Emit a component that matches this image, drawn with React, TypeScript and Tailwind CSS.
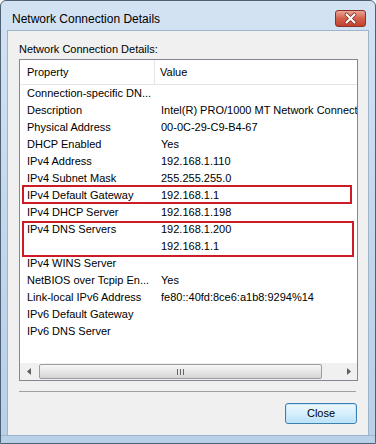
const rows: [string, string][] = [
  ["Connection-specific DN...", ""],
  ["Description", "Intel(R) PRO/1000 MT Network Connection"],
  ["Physical Address", "00-0C-29-C9-B4-67"],
  ["DHCP Enabled", "Yes"],
  ["IPv4 Address", "192.168.1.110"],
  ["IPv4 Subnet Mask", "255.255.255.0"],
  ["IPv4 Default Gateway", "192.168.1.1"],
  ["IPv4 DHCP Server", "192.168.1.198"],
  ["IPv4 DNS Servers", "192.168.1.200"],
  ["", "192.168.1.1"],
  ["IPv4 WINS Server", ""],
  ["NetBIOS over Tcpip En...", "Yes"],
  ["Link-local IPv6 Address", "fe80::40fd:8ce6:a1b8:9294%14"],
  ["IPv6 Default Gateway", ""],
  ["IPv6 DNS Server", ""],
]

function CloseX() {
  return (
    <svg width="31" height="17" viewBox="0 0 31 17">
      <path d="M11.5 4.5 L19.5 12.5 M19.5 4.5 L11.5 12.5" stroke="#7a2418" strokeWidth="3.6" strokeLinecap="round" />
      <path d="M11.5 4.5 L19.5 12.5 M19.5 4.5 L11.5 12.5" stroke="#ffffff" strokeWidth="2.2" strokeLinecap="round" />
    </svg>
  )
}

function HScrollBar() {
  return (
    <div className="flex h-[17px] items-center bg-[#f0f0f0]">
      <div className="flex w-[17px] items-center justify-center">
        <svg width="4" height="7" viewBox="0 0 4 7">
          <path d="M4 0 L0 3.5 L4 7 Z" fill="#606060" />
        </svg>
      </div>
      <div className="ml-[2px] flex h-[15px] w-[283px] items-center justify-center rounded-[2px] border border-[#9c9c9c] bg-gradient-to-b from-[#f6f6f6] via-[#e6e6e6] to-[#d6d6d6]">
        <div className="flex gap-[2px]">
          <div className="h-[6px] w-[1px] bg-[#666]" />
          <div className="h-[6px] w-[1px] bg-[#666]" />
          <div className="h-[6px] w-[1px] bg-[#666]" />
        </div>
      </div>
      <div className="flex-1" />
      <div className="flex w-[17px] items-center justify-center">
        <svg width="4" height="7" viewBox="0 0 4 7">
          <path d="M0 0 L4 3.5 L0 7 Z" fill="#606060" />
        </svg>
      </div>
    </div>
  )
}

export default function App() {
  return (
    <div
      className="flex h-[444px] w-[376px] flex-col rounded-t-[6px] border border-[#4e6174] bg-gradient-to-b from-[#d3e3f4] via-[#c3d7ed] to-[#b9d0e9] text-black"
      style={{ fontFamily: '"Liberation Sans", Arial, sans-serif' }}
    >
      {/* title bar */}
      <div className="flex h-[29px] items-center justify-between pl-[11px] pr-[9px] pt-[6px]">
        <span className="text-[12px]">Network Connection Details</span>
        <div className="h-[17px] w-[31px] rounded-[3px] border border-[#8a3226] bg-gradient-to-b from-[#e8a596] via-[#d2604b] to-[#c3412c]">
          <div className="-m-px">
            <CloseX />
          </div>
        </div>
      </div>

      {/* client area */}
      <div className="mx-[6px] flex flex-1 flex-col border border-b-0 border-[#9fb5cc] bg-[#f0f0f0] px-[11px] text-[11px]">
        <div className="pt-[12px] leading-[13px]">Network Connection Details:</div>

        <div className="relative mt-[3px] flex h-[322px] w-[339px] flex-col overflow-hidden border border-[#828790] bg-white">
          <div className="flex h-[25px] shrink-0 items-center border-b border-[#e5e5e5]">
            <div className="flex h-full w-[135px] items-center border-r border-[#e5e5e5] pl-[7px]">Property</div>
            <div className="pl-[5px]">Value</div>
          </div>
          <div className="flex-1">
            {rows.map(([k, v], i) => (
              <div key={i} className="flex h-[17px] items-center whitespace-nowrap">
                <div className="w-[135px] shrink-0 pl-[7px]">{k}</div>
                <div className="pl-[6px]">{v}</div>
              </div>
            ))}
          </div>
          <HScrollBar />

          {/* highlight boxes */}
          <div className="absolute left-[2px] top-[125px] h-[19px] w-[330px] border-2 border-[#cc1b25]" />
          <div className="absolute left-[2px] top-[161px] h-[36px] w-[332px] border-2 border-[#cc1b25]" />
        </div>

        <div className="mt-[10px] w-[337px] border-t border-[#a0a0a0]" />

        <div className="mt-[11px] flex justify-end pr-[0px]">
          <button className="h-[21px] w-[72px] rounded-[3px] border border-[#3c7fb1] bg-gradient-to-b from-[#eef8fe] via-[#d6effc] to-[#b9e2f9] text-[11px] shadow-[inset_0_0_0_1px_#c4e6fa]">
            Close
          </button>
        </div>
      </div>
      <div className="h-[8px] border-t border-[#9fb5cc]" />
    </div>
  )
}
